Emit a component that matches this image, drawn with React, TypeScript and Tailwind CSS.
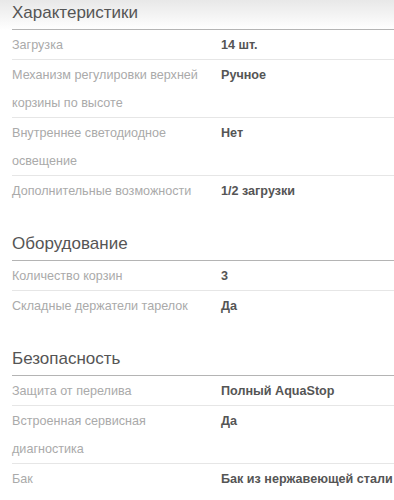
import React from "react";

type Row = { label: string; value: string };
type Section = { title: string; rows: Row[] };

const sections: Section[] = [
  {
    title: "Характеристики",
    rows: [
      { label: "Загрузка", value: "14 шт." },
      { label: "Механизм регулировки верхней корзины по высоте", value: "Ручное" },
      { label: "Внутреннее светодиодное освещение", value: "Нет" },
      { label: "Дополнительные возможности", value: "1/2 загрузки" },
    ],
  },
  {
    title: "Оборудование",
    rows: [
      { label: "Количество корзин", value: "3" },
      { label: "Складные держатели тарелок", value: "Да" },
    ],
  },
  {
    title: "Безопасность",
    rows: [
      { label: "Защита от перелива", value: "Полный AquaStop" },
      { label: "Встроенная сервисная диагностика", value: "Да" },
      { label: "Бак", value: "Бак из нержавеющей стали" },
    ],
  },
];

export default function App() {
  return (
    <div
      className="w-[394px] h-[500px] overflow-hidden bg-white bg-linear-to-b from-[#e8e8e8] via-white via-[6%] to-white"
      style={{ fontFamily: '"Liberation Sans", Arial, sans-serif' }}
    >
      <div className="pl-[12px]">
        {sections.map((s, si) => (
          <div key={s.title} className={si > 0 ? "mt-[25px]" : ""}>
            <div className="h-[30px] pb-[3px] leading-[26px] text-[17px] text-[#555] border-b border-[#b4b4b4]">
              {s.title}
            </div>
            {s.rows.map((r, ri) => (
              <div
                key={r.label}
                className={
                  "flex pt-px text-[12.6px] leading-[28px] " +
                  (ri < s.rows.length - 1 ? "border-b border-[#e6e6e6]" : "pb-px")
                }
              >
                <div className="w-[200px] shrink-0 text-[#aaaaaa]">{r.label}</div>
                <div className="ml-[9px] font-bold text-[#555]">{r.value}</div>
              </div>
            ))}
          </div>
        ))}
      </div>
    </div>
  );
}
